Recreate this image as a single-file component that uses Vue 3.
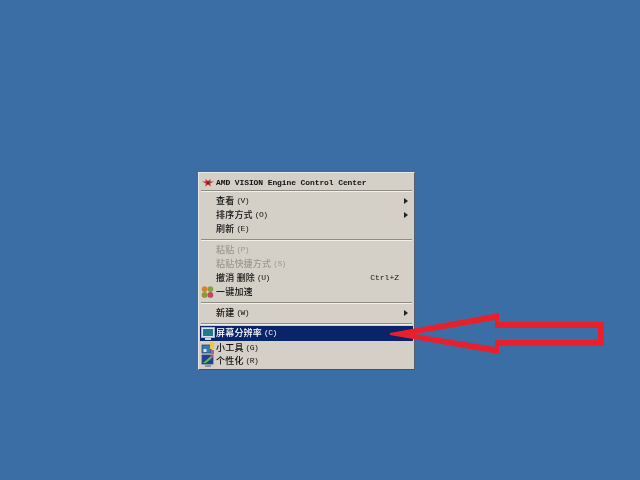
<script setup>
const arrowPath =
  'M390 333 L499 313 L499 322 L604 322 L604 346 L499 346 L499 354 L390 335 Z ' +
  'M415 334 L495 320 L495 328 L598 328 L598 340 L495 340 L495 347 Z'
</script>

<template>
  <div class="desktop">
    <div class="menu">
      <div class="row first">
        <svg class="icon" width="14" height="12" viewBox="0 0 14 12">
          <path d="M1 4.5 L5 4.5 L4 2 L7 4 L10 2 L9 4.5 L13 4.5 L9 6.5 L10 9.5 L7 7.5 L4 9.5 L5 6.5 Z" fill="#c42a2a" />
          <circle cx="7" cy="6" r="1.3" fill="#6e2a20" />
        </svg>
        <span class="latin">AMD VISION Engine Control Center</span>
      </div>
      <div class="sep thin"></div>
      <div class="row"><span class="cn">查看</span><span class="key">(V)</span><i class="caret"></i></div>
      <div class="row"><span class="cn">排序方式</span><span class="key">(O)</span><i class="caret"></i></div>
      <div class="row"><span class="cn">刷新</span><span class="key">(E)</span></div>
      <div class="sep"></div>
      <div class="row off"><span class="cn">粘贴</span><span class="key">(P)</span></div>
      <div class="row off"><span class="cn">粘贴快捷方式</span><span class="key">(S)</span></div>
      <div class="row"><span class="cn">撤消 删除</span><span class="key">(U)</span><span class="shortcut">Ctrl+Z</span></div>
      <div class="row">
        <svg class="icon" width="13" height="13" viewBox="0 0 13 13">
          <circle cx="3.6" cy="3.6" r="2.9" fill="#d9802c" />
          <circle cx="9.4" cy="3.6" r="2.9" fill="#7fa63c" />
          <circle cx="3.6" cy="9.4" r="2.9" fill="#8a9a3a" />
          <circle cx="9.4" cy="9.4" r="2.9" fill="#c4485a" />
        </svg>
        <span class="cn">一键加速</span>
      </div>
      <div class="sep"></div>
      <div class="row"><span class="cn">新建</span><span class="key">(W)</span><i class="caret"></i></div>
      <div class="sep before-active"></div>
      <div class="row active">
        <svg class="icon" width="14" height="14" viewBox="0 0 14 14">
          <rect x="0.5" y="0.5" width="13" height="10" fill="#d8e4ee" stroke="#9fb4c8" />
          <rect x="2" y="2" width="10" height="7" fill="#1d7c8c" />
          <rect x="4" y="11" width="6" height="2" fill="#c8d4e0" />
        </svg>
        <span class="cn">屏幕分辨率</span><span class="key">(C)</span>
      </div>
      <div class="row short">
        <svg class="icon" width="15" height="14" viewBox="0 0 15 14">
          <rect x="1" y="4" width="9" height="8" fill="#3b78b0" stroke="#27476c" stroke-width="0.8" />
          <rect x="2.5" y="8" width="3" height="3" fill="#d8e4ee" />
          <rect x="9" y="1" width="4" height="7" fill="#e8c848" />
          <rect x="10" y="9" width="3" height="4" fill="#b05ca8" />
        </svg>
        <span class="cn">小工具</span><span class="key">(G)</span>
      </div>
      <div class="row">
        <svg class="icon" width="14" height="14" viewBox="0 0 14 14">
          <rect x="1" y="1" width="11" height="9" fill="#1f3f9c" stroke="#3c4a60" stroke-width="0.8" />
          <path d="M2 9 L10 2 L11 4 L5 9 Z" fill="#5fbf58" />
          <path d="M9 2 L12 0.5 L12 4 Z" fill="#d8489c" />
          <rect x="4" y="11" width="6" height="2" fill="#8a94a4" />
        </svg>
        <span class="cn">个性化</span><span class="key">(R)</span>
      </div>
    </div>
    <svg class="pointer" width="640" height="480" viewBox="0 0 640 480">
      <path :d="arrowPath" fill="#e9202c" fill-rule="evenodd" />
    </svg>
  </div>
</template>

<style>
html, body { margin: 0; padding: 0; }
</style>

<style scoped>
.desktop {
  position: relative;
  box-sizing: border-box;
  width: 640px;
  height: 480px;
  overflow: hidden;
  padding: 172px 0 0 198px;
  background: #3a6ea5;
}
.pointer {
  position: absolute;
  left: 0;
  top: 0;
  filter: blur(0.5px);
}
.menu {
  box-sizing: border-box;
  width: 217px;
  height: 198px;
  padding: 3px 1px 2px;
  background: #d4d0c8;
  border: 1px solid;
  border-color: #e8e6e0 #55606a #46525e #e8e6e0;
  filter: blur(0.35px);
  font-family: "Noto Sans CJK SC", "Liberation Sans", sans-serif;
  color: #111;
}
.row {
  position: relative;
  display: flex;
  align-items: center;
  height: 14px;
  padding-left: 16px;
  font-size: 9px;
  font-weight: 500;
  letter-spacing: 0.2px;
  line-height: 14px;
  white-space: nowrap;
}
.first,
.short {
  height: 13px;
}
.latin {
  font-family: "Liberation Mono", monospace;
  font-size: 8px;
  font-weight: 700;
  letter-spacing: -0.1px;
}
.key {
  margin-left: 2px;
  font-family: "Liberation Mono", monospace;
  font-size: 8px;
  font-weight: 400;
  letter-spacing: -0.6px;
}
.icon {
  position: absolute;
  left: 1px;
  top: 50%;
  transform: translateY(-50%);
}
.caret {
  position: absolute;
  right: 5px;
  top: 4px;
  border-left: 4px solid #222;
  border-top: 3px solid transparent;
  border-bottom: 3px solid transparent;
}
.shortcut {
  position: absolute;
  right: 14px;
  font-family: "Liberation Mono", monospace;
  font-size: 8px;
  font-weight: 400;
  letter-spacing: 0;
}
.off {
  color: #9a9892;
}
.sep {
  height: 1px;
  margin: 3px 1px 2px;
  background: #8f8c85;
  border-bottom: 1px solid #f2f0ea;
}
.thin {
  margin: 1px 1px 2px;
}
.before-active {
  margin-bottom: 1px;
}
.active {
  height: 14px;
  padding-bottom: 1px;
  background: #0a246a;
  color: #fff;
}
.active .icon {
  margin-top: 0.5px;
}
</style>
